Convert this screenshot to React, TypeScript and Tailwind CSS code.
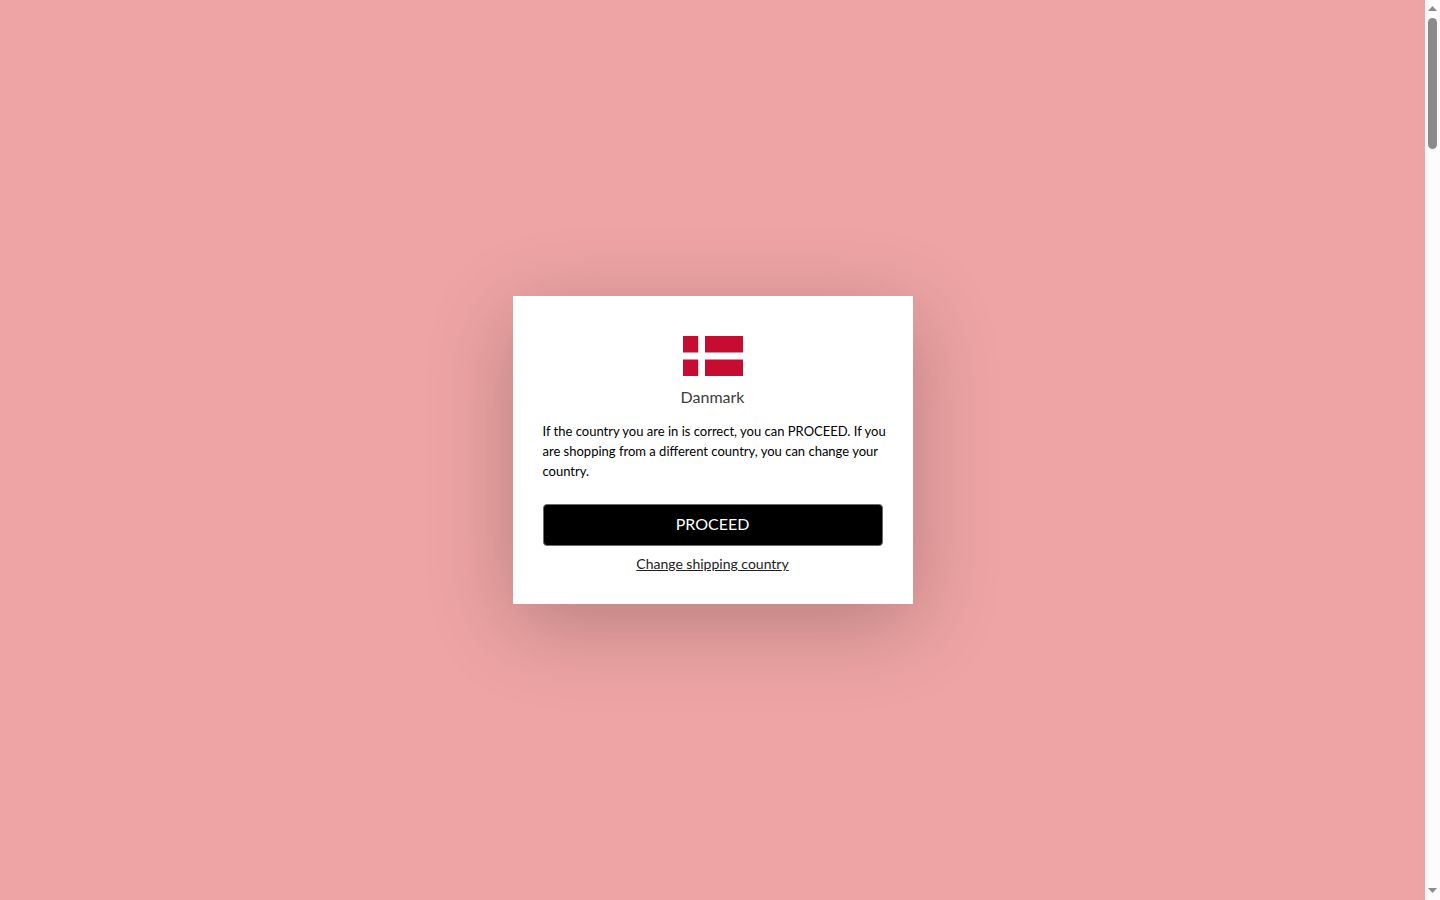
import React, { useState } from 'react'

const COUNTRY = 'Danmark'

// ─── Flag ─────────────────────────────────────────────────────────────────────

function DanishFlag() {
  return (
    <svg width="60" height="40" viewBox="0 0 60 40" role="img" aria-label={COUNTRY}>
      <rect width="60" height="40" fill="#c60c30" />
      <path d="M15.2 0h6.8v40h-6.8zM0 16.4h60v7H0z" fill="#fff" />
    </svg>
  )
}

// ─── Scroll track ─────────────────────────────────────────────────────────────

function ScrollTrack() {
  return (
    <div className="flex w-[15px] shrink-0 flex-col items-center bg-[#fcfcfc]" aria-hidden="true">
      <svg width="15" height="18" viewBox="0 0 15 18" fill="#8b8b8b">
        <path d="M7.5 6L12 11H3z" />
      </svg>
      <div className="flex w-full flex-1 flex-col items-center">
        <div className="h-[131px] w-[9px] rounded-full bg-[#8b8b8b]" />
      </div>
      <svg width="15" height="18" viewBox="0 0 15 18" fill="#8b8b8b">
        <path d="M3 6h9l-4.5 5z" />
      </svg>
    </div>
  )
}

// ─── Country dialog ───────────────────────────────────────────────────────────

function CountryDialog({ onProceed }: { onProceed: () => void }) {
  return (
    <section
      role="dialog"
      aria-labelledby="country-name"
      className="flex w-[400px] flex-col items-center bg-white px-[30px] pt-10 pb-[30px] shadow-[0_20px_80px_rgba(0,0,0,0.23)]"
    >
      <DanishFlag />
      <h1 id="country-name" className="mt-[9px] text-[16px] leading-6 text-[#3c3c3c]">{COUNTRY}</h1>
      <p className="mt-3 w-full text-[13px] leading-5 whitespace-nowrap text-black">
        If the country you are in is correct, you can PROCEED. If you<br />
        are shopping from a different country, you can change your<br />
        country.
      </p>
      <button
        type="button"
        onClick={onProceed}
        className="mt-[23px] h-[42px] w-full rounded border border-[#6b6b6b] bg-black pb-0.5 text-[16px] text-white"
      >
        PROCEED
      </button>
      <a href="#countries" className="mt-2 text-[14px] leading-5 text-[#222] underline">
        Change shipping country
      </a>
    </section>
  )
}

export default function App() {
  const [open, setOpen] = useState(true)

  return (
    <div className="flex h-screen bg-[#eea4a4] font-['Lato','Liberation_Sans',sans-serif]">
      <main className="flex flex-1 items-center justify-center">
        {open && <CountryDialog onProceed={() => setOpen(false)} />}
      </main>
      <ScrollTrack />
    </div>
  )
}
